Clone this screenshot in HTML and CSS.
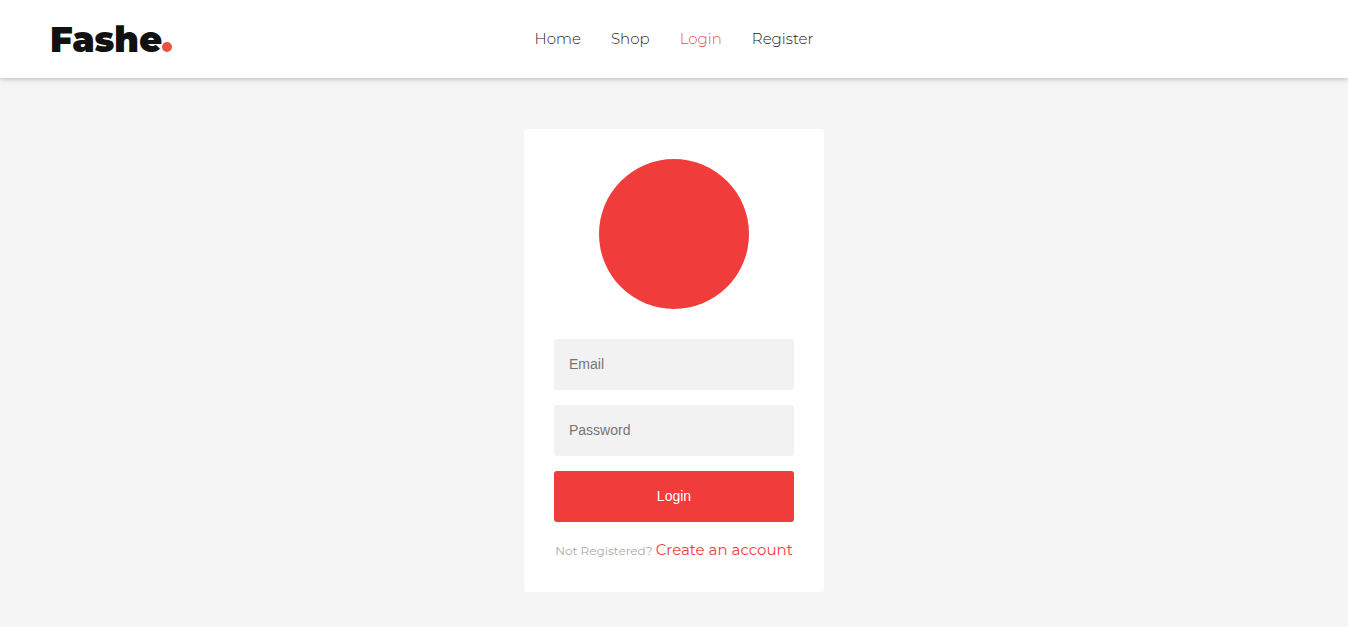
FILE: index.html
```html
<!DOCTYPE html>
<html lang="en">
<head>
<meta charset="utf-8">
<meta name="viewport" content="width=device-width, initial-scale=1">
<title>Fashe - Login</title>
<link rel="stylesheet" href="styles.css">
</head>
<body>
<header class="header">
  <a class="logo" href="#">Fashe<span class="logo-dot"></span></a>
  <nav class="nav">
    <a href="#">Home</a>
    <a href="#">Shop</a>
    <a class="active" href="#">Login</a>
    <a href="#">Register</a>
  </nav>
</header>
<main class="page">
  <form class="card">
    <div class="avatar"></div>
    <input class="field" type="email" placeholder="Email" aria-label="Email">
    <input class="field" type="password" placeholder="Password" aria-label="Password">
    <button class="submit" type="submit">Login</button>
    <p class="message">Not Registered? <a href="#">Create an account</a></p>
  </form>
</main>
</body>
</html>
```
FILE: styles.css
```css
* { box-sizing: border-box; }
body {
  margin: 0;
  min-height: 100vh;
  background: #f5f5f5;
  font-family: Montserrat, Inter, sans-serif;
}
a { text-decoration: none; }
.header {
  display: grid;
  grid-template-columns: 1fr auto 1fr;
  align-items: center;
  padding: 17px 50px;
  background: #fff;
  box-shadow: 0 1px 5px rgba(0, 0, 0, 0.25);
}
.logo {
  display: flex;
  align-items: baseline;
  padding-top: 2px;
  color: #111;
  font-size: 35px;
  font-weight: 900;
  line-height: 42px;
}
.logo-dot {
  width: 10px;
  height: 10px;
  border-radius: 50%;
  background: #e65540;
}
.nav { display: flex; gap: 30px; }
.nav a {
  color: #222;
  font-size: 15px;
  line-height: 24px;
  font-weight: 300;
}
.nav .active { color: #e65540; }
.page { display: flex; justify-content: center; padding: 51px 20px 35px; }
.card {
  display: flex;
  flex-direction: column;
  gap: 15px;
  width: 300px;
  padding: 30px 30px 28px;
  background: #fff;
  border-radius: 3px;
}
.avatar {
  align-self: center;
  width: 150px;
  height: 150px;
  margin-bottom: 15px;
  border-radius: 50%;
  background: #f03c3b;
}
.field, .submit {
  width: 100%;
  height: 51px;
  padding: 0 15px 2px;
  border: 0;
  border-radius: 3px;
  font: 14px "Liberation Sans", Arial, sans-serif;
}
.field { background: #f2f2f2; }
.submit { background: #f03c3b; color: #fff; }
.message {
  margin: 0;
  color: #aaa;
  font-size: 12px;
  line-height: 26px;
  text-align: center;
  white-space: nowrap;
}
.message a { color: #f03c3b; font-size: 15px; }
```
